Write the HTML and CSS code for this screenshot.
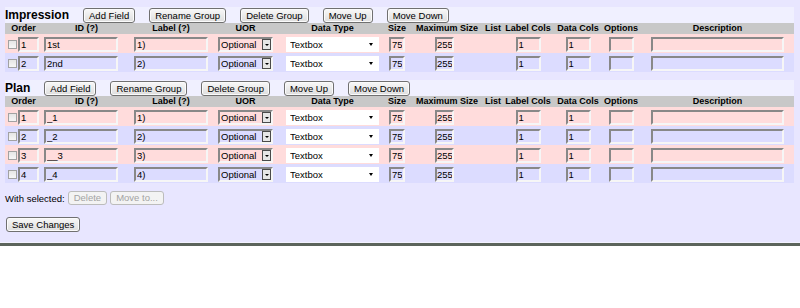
FILE: index.html
```html
<html>
<head>
  <link rel="stylesheet" href="styles.css">
</head>
<body>
  <div class="page">
    <div class="group">
      <div class="group-bar">
        <h2 class="group-title">Impression</h2>
        <button>Add Field</button>
        <button>Rename Group</button>
        <button>Delete Group</button>
        <button>Move Up</button>
        <button>Move Down</button>
      </div>
      <table class="fields">
        <colgroup>
          <col class="c-order"><col class="c-id"><col class="c-label"><col class="c-uor">
          <col class="c-type"><col class="c-size"><col class="c-max"><col class="c-list">
          <col class="c-lcols"><col class="c-dcols"><col class="c-opts"><col class="c-desc">
        </colgroup>
        <tr class="head">
          <th>Order</th><th>ID (?)</th><th>Label (?)</th><th>UOR</th><th>Data Type</th><th>Size</th>
          <th>Maximum Size</th><th>List</th><th>Label Cols</th><th>Data Cols</th><th>Options</th><th>Description</th>
        </tr>
        <tr class="odd">
          <td class="order"><input type="checkbox" class="pick"><input class="txt w-order" value="1"></td>
          <td class="id"><input class="txt w-name" value="1st"></td>
          <td><input class="txt w-name" value="1)"></td>
          <td><span class="uor"><select><option>Optional</option></select><span class="drop"></span></span></td>
          <td><span class="dtype"><select><option>Textbox</option></select></span></td>
          <td><input class="txt w-size" value="75"></td>
          <td class="max"><input class="txt w-max" value="255"></td>
          <td></td>
          <td><input class="txt w-cols" value="1"></td>
          <td><input class="txt w-cols" value="1"></td>
          <td><input class="txt w-cols" value=""></td>
          <td><input class="txt w-desc" value=""></td>
        </tr>
        <tr class="even">
          <td class="order"><input type="checkbox" class="pick"><input class="txt w-order" value="2"></td>
          <td class="id"><input class="txt w-name" value="2nd"></td>
          <td><input class="txt w-name" value="2)"></td>
          <td><span class="uor"><select><option>Optional</option></select><span class="drop"></span></span></td>
          <td><span class="dtype"><select><option>Textbox</option></select></span></td>
          <td><input class="txt w-size" value="75"></td>
          <td class="max"><input class="txt w-max" value="255"></td>
          <td></td>
          <td><input class="txt w-cols" value="1"></td>
          <td><input class="txt w-cols" value="1"></td>
          <td><input class="txt w-cols" value=""></td>
          <td><input class="txt w-desc" value=""></td>
        </tr>
      </table>
    </div>

    <div class="group">
      <div class="group-bar">
        <h2 class="group-title">Plan</h2>
        <button>Add Field</button>
        <button>Rename Group</button>
        <button>Delete Group</button>
        <button>Move Up</button>
        <button>Move Down</button>
      </div>
      <table class="fields">
        <colgroup>
          <col class="c-order"><col class="c-id"><col class="c-label"><col class="c-uor">
          <col class="c-type"><col class="c-size"><col class="c-max"><col class="c-list">
          <col class="c-lcols"><col class="c-dcols"><col class="c-opts"><col class="c-desc">
        </colgroup>
        <tr class="head">
          <th>Order</th><th>ID (?)</th><th>Label (?)</th><th>UOR</th><th>Data Type</th><th>Size</th>
          <th>Maximum Size</th><th>List</th><th>Label Cols</th><th>Data Cols</th><th>Options</th><th>Description</th>
        </tr>
        <tr class="odd">
          <td class="order"><input type="checkbox" class="pick"><input class="txt w-order" value="1"></td>
          <td class="id"><input class="txt w-name" value="_1"></td>
          <td><input class="txt w-name" value="1)"></td>
          <td><span class="uor"><select><option>Optional</option></select><span class="drop"></span></span></td>
          <td><span class="dtype"><select><option>Textbox</option></select></span></td>
          <td><input class="txt w-size" value="75"></td>
          <td class="max"><input class="txt w-max" value="255"></td>
          <td></td>
          <td><input class="txt w-cols" value="1"></td>
          <td><input class="txt w-cols" value="1"></td>
          <td><input class="txt w-cols" value=""></td>
          <td><input class="txt w-desc" value=""></td>
        </tr>
        <tr class="even">
          <td class="order"><input type="checkbox" class="pick"><input class="txt w-order" value="2"></td>
          <td class="id"><input class="txt w-name" value="_2"></td>
          <td><input class="txt w-name" value="2)"></td>
          <td><span class="uor"><select><option>Optional</option></select><span class="drop"></span></span></td>
          <td><span class="dtype"><select><option>Textbox</option></select></span></td>
          <td><input class="txt w-size" value="75"></td>
          <td class="max"><input class="txt w-max" value="255"></td>
          <td></td>
          <td><input class="txt w-cols" value="1"></td>
          <td><input class="txt w-cols" value="1"></td>
          <td><input class="txt w-cols" value=""></td>
          <td><input class="txt w-desc" value=""></td>
        </tr>
        <tr class="odd">
          <td class="order"><input type="checkbox" class="pick"><input class="txt w-order" value="3"></td>
          <td class="id"><input class="txt w-name" value="__3"></td>
          <td><input class="txt w-name" value="3)"></td>
          <td><span class="uor"><select><option>Optional</option></select><span class="drop"></span></span></td>
          <td><span class="dtype"><select><option>Textbox</option></select></span></td>
          <td><input class="txt w-size" value="75"></td>
          <td class="max"><input class="txt w-max" value="255"></td>
          <td></td>
          <td><input class="txt w-cols" value="1"></td>
          <td><input class="txt w-cols" value="1"></td>
          <td><input class="txt w-cols" value=""></td>
          <td><input class="txt w-desc" value=""></td>
        </tr>
        <tr class="even">
          <td class="order"><input type="checkbox" class="pick"><input class="txt w-order" value="4"></td>
          <td class="id"><input class="txt w-name" value="_4"></td>
          <td><input class="txt w-name" value="4)"></td>
          <td><span class="uor"><select><option>Optional</option></select><span class="drop"></span></span></td>
          <td><span class="dtype"><select><option>Textbox</option></select></span></td>
          <td><input class="txt w-size" value="75"></td>
          <td class="max"><input class="txt w-max" value="255"></td>
          <td></td>
          <td><input class="txt w-cols" value="1"></td>
          <td><input class="txt w-cols" value="1"></td>
          <td><input class="txt w-cols" value=""></td>
          <td><input class="txt w-desc" value=""></td>
        </tr>
      </table>
    </div>

    <div class="selected-bar">
      <span>With selected:</span>
      <button disabled>Delete</button>
      <button disabled>Move to...</button>
    </div>

    <div class="save-bar">
      <button>Save Changes</button>
    </div>
  </div>
</body>
</html>
```

FILE: styles.css
```css
body {
  margin: 0;
  font-family: 'Liberation Sans', Arial, sans-serif;
  font-size: 9.5px;
  color: #000;
  background-color: #fff;
}

.page {
  background-color: #e8e6ff;
  padding: 7px 6px 11px 5px;
  border-bottom: 3px solid #5c645c;
  box-shadow: inset 0 -1px #f3f2ff;
}

.group {
  margin-bottom: 8px;
}

.group-bar {
  display: flex;
  align-items: center;
  gap: 14px;
  height: 16px;
  background-color: #f0f0ff;
}

.group-title {
  margin: 0;
  font-size: 12px;
  line-height: 16px;
  font-weight: bold;
}

button {
  height: 15px;
  padding: 0 5px;
  border: 1px solid #707070;
  border-radius: 3px;
  background: linear-gradient(#f8f8f8, #dedede);
  box-shadow: inset 0 0 0 1px #fbfbfb;
  font-family: 'Liberation Sans', Arial, sans-serif;
  font-size: 9.5px;
  line-height: 13px;
  color: #000;
  cursor: pointer;
}

button:disabled {
  color: #a3a3a3;
  border-color: #bcbcbc;
  background: #f3f3f3;
  box-shadow: none;
  cursor: default;
}

.fields {
  width: 789px;
  table-layout: fixed;
  border-collapse: collapse;
  border-spacing: 0;
}

.c-order { width: 37px; }
.c-id { width: 89px; }
.c-label { width: 80px; }
.c-uor { width: 69px; }
.c-type { width: 105px; }
.c-size { width: 24px; }
.c-max { width: 76px; }
.c-list { width: 16px; }
.c-lcols { width: 54px; }
.c-dcols { width: 46px; }
.c-opts { width: 40px; }
.c-desc { width: 153px; }

.fields th {
  height: 11px;
  padding: 0;
  background-color: #c8c8c8;
  font-size: 9px;
  line-height: 11px;
  font-weight: bold;
  text-align: center;
  white-space: nowrap;
}

.fields td {
  height: 15px;
  padding: 3px 0 1px;
  text-align: center;
  vertical-align: top;
  line-height: 0;
  white-space: nowrap;
}

.odd td {
  background-color: #ffdcdc;
}

.even td {
  background-color: #dcdcff;
}

.fields td.order {
  text-align: left;
  padding-left: 3px;
}

.fields td.id {
  text-align: left;
  padding-left: 2px;
}

.fields td.max {
  padding-right: 5px;
}

.txt {
  box-sizing: border-box;
  height: 15px;
  margin: 0;
  padding: 0 1px;
  border: 2px solid;
  border-color: #888 #f6f6f6 #f6f6f6 #888;
  background: transparent;
  font-family: 'Liberation Sans', Arial, sans-serif;
  font-size: 9.5px;
  color: #000;
  vertical-align: top;
}

.w-order { width: 21px; }
.w-name { width: 74px; }
.w-size { width: 16px; }
.w-max { width: 19px; padding: 0; }
.w-cols { width: 25px; }
.w-desc { width: 133px; }

.pick {
  appearance: none;
  box-sizing: border-box;
  width: 9px;
  height: 9px;
  margin: 3px 1px 0 0;
  border: 1px solid #a2a2a2;
  background: linear-gradient(#e6e6e6, #f6f6f6);
  vertical-align: top;
}

.uor {
  display: inline-flex;
  align-items: center;
  box-sizing: border-box;
  width: 55px;
  height: 15px;
  border: 2px solid;
  border-color: #888 #f6f6f6 #f6f6f6 #888;
  vertical-align: top;
}

.uor select,
.dtype select {
  appearance: none;
  flex: 1;
  min-width: 0;
  height: 11px;
  margin: 0;
  padding: 0 0 0 1px;
  border: none;
  background: transparent;
  font-family: 'Liberation Sans', Arial, sans-serif;
  font-size: 9.5px;
  line-height: 11px;
  color: #000;
}

.drop {
  display: flex;
  align-items: center;
  justify-content: center;
  box-sizing: border-box;
  width: 9px;
  height: 11px;
  border: 1px solid #4a4a4a;
  background-color: #e6e6e6;
}

.drop::after {
  content: '';
  border-left: 2px solid transparent;
  border-right: 2px solid transparent;
  border-top: 2px solid #000;
}

.dtype {
  display: inline-flex;
  align-items: center;
  box-sizing: border-box;
  width: 93px;
  height: 15px;
  padding-left: 3px;
  background-color: #fff;
  vertical-align: top;
}

.dtype::after {
  content: '';
  margin-right: 6px;
  border-left: 2.5px solid transparent;
  border-right: 2.5px solid transparent;
  border-top: 3px solid #000;
}

.selected-bar {
  display: flex;
  align-items: center;
  gap: 3px;
  margin-top: 1px;
  height: 14px;
}

.selected-bar button {
  height: 14px;
  line-height: 12px;
}

.save-bar {
  margin-top: 12px;
  padding-left: 1px;
}
```
